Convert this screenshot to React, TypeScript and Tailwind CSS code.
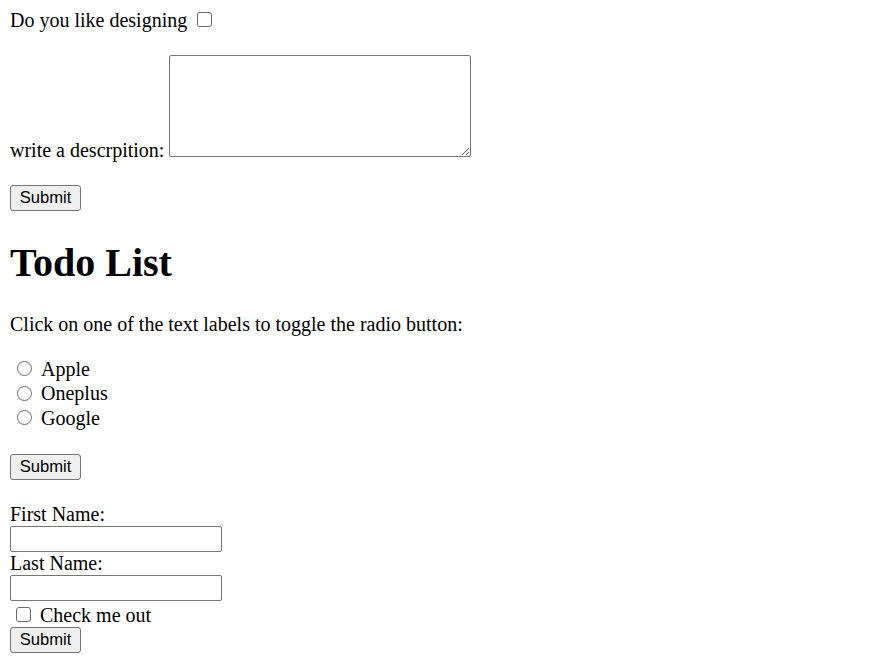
import React from "react";

function Btn() {
  return (
    <button
      type="button"
      className="block w-[71px] h-[26px] bg-[#efefef] border border-[#767676] rounded-[3px] font-['Liberation_Sans',Arial,sans-serif] text-[16.6px] leading-[20px] text-black p-0"
    >
      Submit
    </button>
  );
}

function Radio({ label }: { label: string }) {
  return (
    <div className="flex items-start h-[24.5px]">
      <span className="mt-[5.5px] ml-[7px] w-[15px] h-[15px] rounded-full border border-[#6f6f6f] bg-white shrink-0" />
      <span className="ml-[9px] mt-[2px] leading-[23px]">{label}</span>
    </div>
  );
}

function Box({ className }: { className: string }) {
  return (
    <span
      className={
        "block w-[15px] h-[15px] rounded-[3px] border border-[#6a6a6a] bg-white shrink-0 " +
        className
      }
    />
  );
}

export default function App() {
  return (
    <div className="min-h-[662px] bg-white text-black font-['Liberation_Serif','Times_New_Roman',serif] text-[20px] leading-[23px] px-[10px]">
      {/* line 1 */}
      <div className="flex items-start h-[23px] pt-[9px] box-content">
        <span className="leading-[23px] whitespace-pre">Do you like designing</span>
        <Box className="ml-[10px] mt-[2.5px]" />
      </div>

      {/* textarea row */}
      <div className="flex items-end mt-[23px]">
        <span className="leading-[23px] -mb-[5px] whitespace-pre">write a descrpition:</span>
        <textarea className="block ml-[5px] w-[302px] h-[102px] border border-[#767676] rounded-[2px] bg-white resize" />
      </div>

      <div className="mt-[28px]">
        <Btn />
      </div>

      <h1 className="mt-[28.5px] text-[40px] leading-[46px] font-bold">Todo List</h1>

      <p className="mt-[27px] leading-[23px]">
        Click on one of the text labels to toggle the radio button:
      </p>

      <div className="mt-[20px]">
        <Radio label="Apple" />
        <Radio label="Oneplus" />
        <Radio label="Google" />
      </div>

      <div className="mt-[25px]">
        <Btn />
      </div>

      <div className="mt-[23px] leading-[23px]">First Name:</div>
      <input
        type="text"
        className="block w-[212px] h-[26px] border border-[#767676] rounded-[2px] bg-white"
      />
      <div className="leading-[23px]">Last Name:</div>
      <input
        type="text"
        className="block w-[212px] h-[26px] border border-[#767676] rounded-[2px] bg-white"
      />
      <div className="flex items-start h-[26px]">
        <Box className="ml-[5.5px] mt-[5.5px]" />
        <span className="ml-[9.5px] mt-[2.5px] leading-[23px]">Check me out</span>
      </div>
      <Btn />
    </div>
  );
}
